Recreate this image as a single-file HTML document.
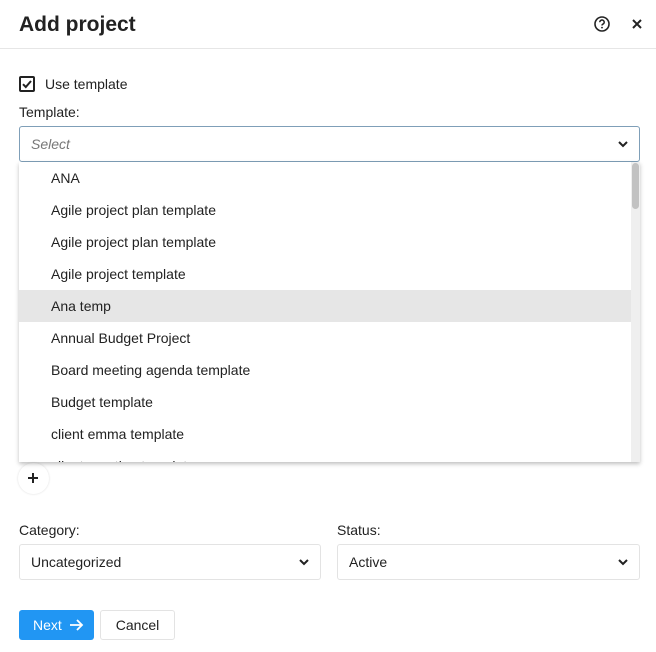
<!DOCTYPE html>
<html><head><style>
*{box-sizing:border-box;margin:0;padding:0}
body{width:656px;height:652px;background:#fff;font-family:"Liberation Sans",sans-serif;color:#222;position:relative;overflow:hidden}
.a{position:absolute}
.sel{position:absolute;border:1px solid #e3e3e3;border-radius:3px;height:36px;font-size:14px;line-height:34px;padding-left:11px}
.chev{position:absolute;right:10px;top:12px}
.item{position:absolute;left:19px;width:612px;height:32px;line-height:32px;padding-left:32px;font-size:14px;color:#222}
</style></head><body>
<div class="a" style="left:19px;top:13px;font-size:21px;font-weight:bold;color:#222">Add project</div>
<svg class="a" style="left:593px;top:15px" width="18" height="18" viewBox="0 0 18 18"><circle cx="9" cy="9" r="7" fill="none" stroke="#222" stroke-width="1.6"/><path d="M6.8 7.2a2.2 2.2 0 1 1 3 2c-.6.3-.8.6-.8 1.3" fill="none" stroke="#222" stroke-width="1.5"/><circle cx="9" cy="12.6" r=".9" fill="#222"/></svg>
<svg class="a" style="left:631px;top:18px" width="12" height="12" viewBox="0 0 12 12"><path d="M2 2L10 10M10 2L2 10" stroke="#222" stroke-width="2"/></svg>
<div class="a" style="left:0;top:48px;width:656px;height:1px;background:#e6e6e6"></div>
<div class="a" style="left:19px;top:76px;width:16px;height:16px;border:2px solid #222;border-radius:2px"></div>
<svg class="a" style="left:21px;top:78px" width="12" height="12" viewBox="0 0 12 12"><path d="M2 6.2L4.8 9L10 3" fill="none" stroke="#222" stroke-width="2"/></svg>
<div class="a" style="left:45px;top:76px;font-size:14px">Use template</div>
<div class="a" style="left:19px;top:104px;font-size:14px">Template:</div>
<div class="sel" style="left:19px;top:126px;width:621px;border-color:#7f9fb8;font-style:italic;color:#777">Select<svg class="chev" width="12" height="10" viewBox="0 0 12 10"><path d="M2 3L6 7L10 3" fill="none" stroke="#222" stroke-width="2"/></svg></div>
<div class="a" style="left:19px;top:162px;width:621px;height:300px;background:#fff;box-shadow:0 2px 4px rgba(0,0,0,.25);overflow:hidden">
<div class="a" style="left:0;top:288px;width:612px;height:32px;line-height:32px;padding-left:32px;font-size:14px">client meeting template</div>
</div>
<div class="a" style="left:19px;top:290px;width:612px;height:32px;background:#e6e6e6"></div>
<div class="item" style="top:162px">ANA</div>
<div class="item" style="top:194px">Agile project plan template</div>
<div class="item" style="top:226px">Agile project plan template</div>
<div class="item" style="top:258px">Agile project template</div>
<div class="item" style="top:290px">Ana temp</div>
<div class="item" style="top:322px">Annual Budget Project</div>
<div class="item" style="top:354px">Board meeting agenda template</div>
<div class="item" style="top:386px">Budget template</div>
<div class="item" style="top:418px">client emma template</div>
<div class="a" style="left:631px;top:162px;width:9px;height:300px;background:#efefef"></div>
<div class="a" style="left:632px;top:163px;width:7px;height:46px;background:#c2c2c2;border-radius:4px"></div>
<div class="a" style="left:18px;top:463px;width:31px;height:31px;border-radius:50%;box-shadow:0 0 2px rgba(0,0,0,.15)"></div>
<svg class="a" style="left:27px;top:472px" width="12" height="12" viewBox="0 0 12 12"><path d="M6 1V11M1 6H11" stroke="#222" stroke-width="2"/></svg>
<div class="a" style="left:19px;top:522px;font-size:14px">Category:</div>
<div class="a" style="left:337px;top:522px;font-size:14px">Status:</div>
<div class="sel" style="left:19px;top:544px;width:302px">Uncategorized<svg class="chev" width="12" height="10" viewBox="0 0 12 10"><path d="M2 3L6 7L10 3" fill="none" stroke="#222" stroke-width="2"/></svg></div>
<div class="sel" style="left:337px;top:544px;width:303px">Active<svg class="chev" width="12" height="10" viewBox="0 0 12 10"><path d="M2 3L6 7L10 3" fill="none" stroke="#222" stroke-width="2"/></svg></div>
<div class="a" style="left:19px;top:610px;width:75px;height:30px;background:#2196f3;border-radius:3px;color:#fff;font-size:14px;line-height:30px;padding-left:14px">Next<svg style="position:absolute;left:50px;top:8px" width="15" height="14" viewBox="0 0 15 14"><path d="M1 7H13M8 2L13 7L8 12" fill="none" stroke="#fff" stroke-width="1.8"/></svg></div>
<div class="a" style="left:100px;top:610px;width:75px;height:30px;border:1px solid #e3e3e3;border-radius:3px;font-size:14px;line-height:28px;text-align:center">Cancel</div>
</body></html>
